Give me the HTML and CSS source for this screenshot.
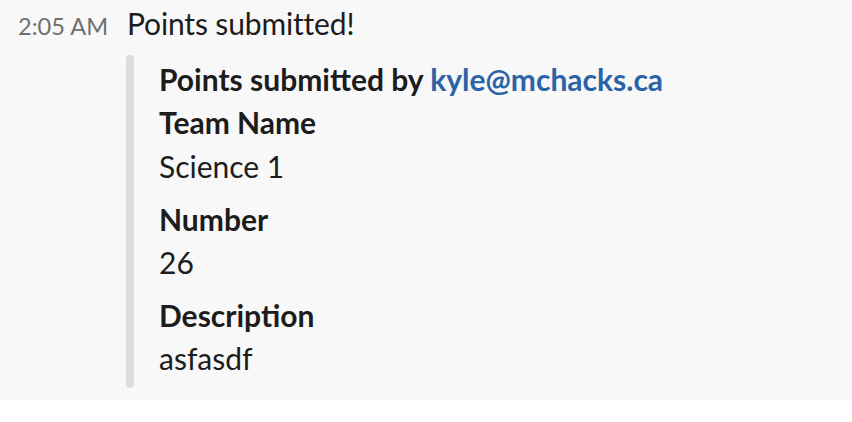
FILE: index.html
```html
<!DOCTYPE html>
<html>
<head>
<meta charset="utf-8">
<link rel="stylesheet" href="styles.css">
</head>
<body>
<div class="message">
  <div class="gutter"><span class="time">2:05 AM</span></div>
  <div class="content">
    <div class="text">Points submitted!</div>
    <div class="attachment">
      <div class="bar"></div>
      <div class="body">
        <div class="pretext">Points submitted by <a class="link" href="#">kyle@mchacks.ca</a></div>
        <div class="field">
          <div class="label">Team Name</div>
          <div class="value">Science 1</div>
        </div>
        <div class="field">
          <div class="label">Number</div>
          <div class="value">26</div>
        </div>
        <div class="field">
          <div class="label">Description</div>
          <div class="value">asfasdf</div>
        </div>
      </div>
    </div>
  </div>
</div>
</body>
</html>
```

FILE: styles.css
```css
html, body {
  margin: 0;
  padding: 0;
  background: #ffffff;
}
body {
  font-family: Lato, "Noto Sans", sans-serif;
  color: #1d1c1d;
}
.message {
  display: flex;
  align-items: baseline;
  background: #f8f8f8;
  height: 400px;
  box-sizing: border-box;
  padding: 2px 0 0 18px;
}
.gutter {
  width: 109px;
  flex: none;
  font-size: 30px;
  line-height: 43.4px;
}
.time {
  font-size: 23.6px;
  color: #6f7072;
}
.content {
  flex: 1;
  font-size: 30px;
  line-height: 43.4px;
}
.text {
  color: #1d1c1d;
  letter-spacing: -0.15px;
}
.attachment {
  display: flex;
  margin-top: 9.6px;
  margin-left: -1px;
}
.bar {
  width: 8px;
  flex: none;
  border-radius: 4px;
  background: #dddddd;
}
.body {
  padding: 3px 0 7px 25px;
}
.pretext {
  font-weight: 700;
}
.link {
  color: #2a64a6;
  text-decoration: none;
}
.field + .field {
  margin-top: 9.5px;
}
.label {
  font-weight: 700;
}
```
